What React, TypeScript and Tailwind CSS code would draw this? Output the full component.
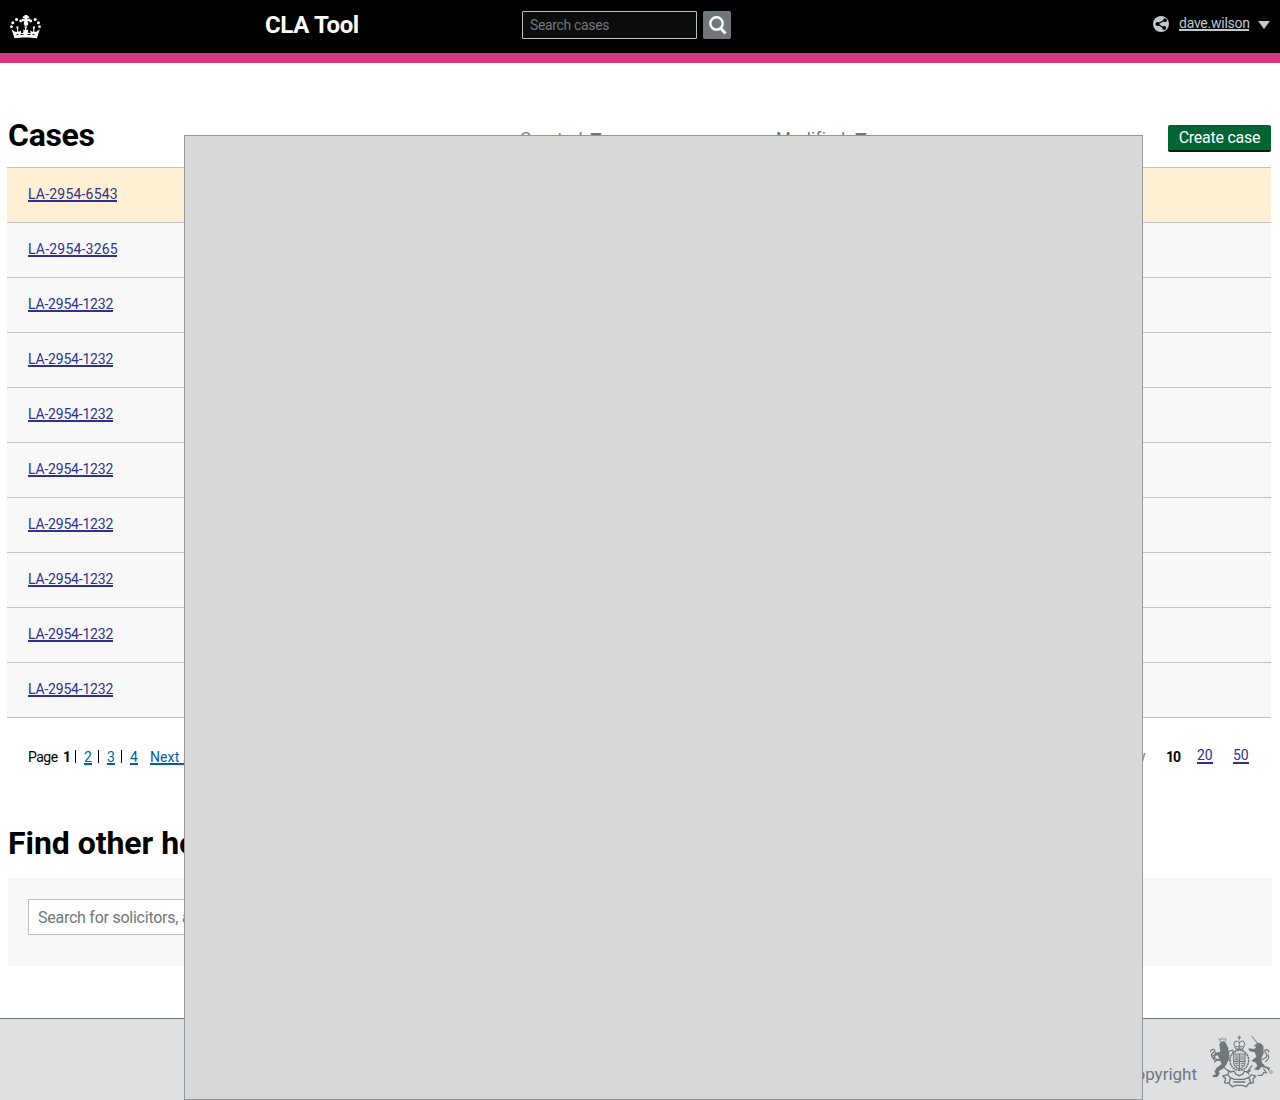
import React from "react";

const cases = [
  { id: "LA-2954-6543", active: true },
  { id: "LA-2954-3265" },
  { id: "LA-2954-1232" },
  { id: "LA-2954-1232" },
  { id: "LA-2954-1232" },
  { id: "LA-2954-1232" },
  { id: "LA-2954-1232" },
  { id: "LA-2954-1232" },
  { id: "LA-2954-1232" },
  { id: "LA-2954-1232" },
];

function Crown() {
  return (
    <svg viewBox="0 0 31 24" className="h-6 w-[31px]" fill="#fff">
      <path d="M14.500 0h3v1.300h1.600v1.900h-1.600v1.300l2.600-1v3l-2.500-.5.6 2.500c.4 1.400-.8 2.400-2.200 2.400s-2.600-1-2.200-2.400l.6-2.500-2.500.5v-3l2.600 1V3.200h-1.600V1.300h1.600z" />
      <circle cx="10.700" cy="6" r="1.400" />
      <circle cx="6.500" cy="4.600" r="1.500" />
      <circle cx="2.800" cy="7.700" r="1.500" />
      <circle cx="1.500" cy="11.700" r="1.400" />
      <circle cx="20.700" cy="6" r="1.400" />
      <circle cx="25.200" cy="4.600" r="1.500" />
      <circle cx="28.400" cy="7.700" r="1.500" />
      <circle cx="29.500" cy="11.700" r="1.400" />
      <path d="M4.500 23.200 1.500 14l3 2.600 2.400.4.300-2-1-3.500h2.400l-.6 3.500.6 2 2.400-1.500v3l2.400-1-.2-3 1.600.7.300-2-1-1.700h3.200l-1 1.700.3 2 1.600-.7-.2 3 2.400 1v-3l2.400 1.500.6-2-.6-3.500h2.400l-1 3.500.3 2 2.400-.4 3-2.600-3 9.200c-6.500-.9-16-.9-22.400 0z" />
      <path d="M6.500 19.800l2-.6M10.500 19.500h3M17.500 19.500h3M22.500 19.200l2 .6" stroke="#000" strokeWidth=".9" />
    </svg>
  );
}

function Crest() {
  return (
    <svg viewBox="0 0 210 186" className="h-[62px] w-[70px]" fill="none" stroke="#6f777b" strokeWidth="3.500">
      <path d="M103 17v14M98 22h10M89 36c-5 10 2 14 4 22h20c2-8 9-12 4-22-5-5-10-2-14 2-4-4-9-7-14-2zM92 50h22M92 57h22M103 38v20" strokeDasharray="5 1.500" />
      <ellipse cx="103" cy="91" rx="28" ry="30" strokeWidth="4.500" strokeDasharray="7 1.500" />
      <path d="M86 72h34v24c0 12-9 18-17 22-8-4-17-10-17-22zM103 72v45M86 94h34" />
      <path d="M90 78h10M90 84h10M90 89h10M108 76v14M114 76v14M90 100h10M92 106h9M107 100h10M107 106h7" strokeWidth="3" />
      <path d="M45 35l-3-9 7 3 3-6 3 6 8-4-2 10z" strokeWidth="2" />
      <path d="M43 42c3-8 16-9 21-1l4 10 3 3-2 5c6 12 5 21 2 30l-8 17-9 10-13 7 3 8-7 10H22l3-6 8-2-5-8 7-12 15-11-5-10-10 1-7 6-1-6 6-5 10-2-5-10-9 2-1-6 10-5 8-2z" fill="#6f777b" stroke="none" />
      <path d="M38 89c-10-2-23-9-17-18 4-5 12-8 7-12-5-3-12 2-12 7M33 65c-3 7-7 13-3 21M26 75c-5 5-4 10 2 14M70 65l13-5 3 8M66 87l12 5M56 112l17 13-5 8" />
      <path d="M138 18l27 28M143 20l17 25" strokeWidth="2" />
      <path d="M146 48l10-8 10-1 9 9 1 22-7 15 2 13 10 11 14 4-3 10-7-8-15-4-10 10-13-3 10-10-4-10-14-5 15-13-5-13-16-4-3-8 18 2 6-7-9-2z" fill="#6f777b" stroke="none" />
      <path d="M171 88c10-2 18-8 13-16-5-6-8-12 0-13 7 0 8 5 7 9M188 73c7 8 2 17-8 22M142 106l-16 20 7 7M175 116l9 12h-8l-5 8h-13" />
      <circle cx="198" cy="126" r="4" strokeWidth="2" />
      <path d="M69 120l8 6 10-3 5 9 11 5 11-5 4-9 11 4 9-7M54 138l14-4 8 9 12 5h30l12-5 10-9 12 5-8 8 1 11-13 2-8 10-12-4H93l-11 4-10-10-13-2 3-11zM76 144l-4 18M133 144l4 18M85 156h36" strokeWidth="4" />
    </svg>
  );
}

function Arrow({ className }: { className: string }) {
  return (
    <svg viewBox="0 0 12 8" className={className} fill="currentColor">
      <path d="M0 0h12L6 8z" />
    </svg>
  );
}

export default function App() {
  return (
    <div className="relative flex h-[1100px] w-[1280px] flex-col overflow-hidden bg-white font-[Roboto,sans-serif] text-black">
      <header className="flex h-[63px] shrink-0 items-start border-b-10 border-[#d53880] bg-black">
        <div className="w-[265px] pt-[15px] pl-[10px]"><Crown /></div>
        <div className="w-[257px] pt-[9px] text-[24px] leading-8 font-bold tracking-[-0.35px] text-white">CLA Tool</div>
        <div className="mt-[11px] h-7 w-[175px] rounded-[1px] border border-[#bfc1c3] bg-[#0b0c0c] pl-[7px] text-[14px] leading-[27px] tracking-[-0.35px] text-[#6f777b]">
          Search cases
        </div>
        <div className="mt-[11px] ml-[6px] h-7 w-7 rounded-[2px] bg-[#6f777b]">
          <svg viewBox="0 0 28 28" className="h-7 w-7" fill="none" stroke="#fff">
            <circle cx="13.500" cy="12.500" r="6.200" strokeWidth="2.400" />
            <path d="M17.500 17l5 5.500" strokeWidth="2.800" />
          </svg>
        </div>
        <div className="ml-auto flex pr-[10px] text-[#bfc9cb]">
          <svg viewBox="0 0 16 16" className="mt-4 mr-[10px] h-4 w-4">
            <circle cx="8" cy="8" r="8" fill="#bfc9cb" />
            <path d="M12 4 4.500 8l6.500 4" fill="none" stroke="#000" strokeWidth="1.300" />
            <circle cx="12" cy="4.200" r="1.900" fill="#000" />
            <circle cx="4.500" cy="8" r="2" fill="#000" />
            <circle cx="11.200" cy="11.900" r="1.900" fill="#000" />
          </svg>
          <a className="mt-[15px] h-4 w-[70px] border-b-2 border-[#bfc9cb] text-[14px] leading-[17px] tracking-[-0.25px] whitespace-nowrap">dave.wilson</a>
          <Arrow className="mt-[21px] ml-[9px] h-2 w-3" />
        </div>
      </header>

      <div className="flex h-[104px] shrink-0 pr-[9px] pl-2">
        <h1 className="w-[512px] pt-[52px] text-[32px] leading-10 font-bold tracking-[-0.3px]">Cases</h1>
        <div className="flex w-[256px] pt-[64px] text-[17px] leading-[22px] text-[#6f777b]">
          <span className="w-[70px] tracking-[0.6px]">Created</span>
          <Arrow className="mt-[6px] h-2 w-3" />
        </div>
        <div className="flex pt-[64px] text-[17px] leading-[22px] text-[#6f777b]">
          <span className="w-[79px] tracking-[0.3px]">Modified</span>
          <Arrow className="mt-[6px] h-2 w-3" />
        </div>
        <button className="mt-[62px] ml-auto h-[27px] w-[103px] rounded-[2px] border-b-2 border-[#001e0f] bg-[#006435] text-[16px] leading-[25px] tracking-[-0.25px] text-white">Create case</button>
      </div>

      <div className="mr-[9px] ml-[7px] shrink-0 border-b border-[#bfc1c3]">
        {cases.map((c, i) => (
          <div key={i} className={`flex h-[55px] border-t border-[#bfc1c3] pt-[18px] pl-[21px] ${c.active ? "bg-[#fff0d4]" : "bg-[#f8f8f8]"}`}>
            <a className={`h-4 border-b-2 border-[#2e3191] text-[14px] leading-[17px] whitespace-nowrap text-[#2e3191] ${i < 2 ? "w-[89px] tracking-[0.2px]" : "w-[85px] tracking-[-0.2px]"}`}>{c.id}</a>
          </div>
        ))}
      </div>

      <div className="flex h-[104px] shrink-0 pt-[30px] pr-[31px] pl-7 text-[14px] leading-[17px]">
        <div className="flex pt-px">
          <span className="w-[35px] tracking-[-0.5px]">Page</span>
          <b className="w-[12px]">1</b>
          {["2", "3", "4"].map((n) => (
            <span key={n} className="flex w-[23px]">
              <span className="mt-px mr-2 h-[13px] w-px bg-black" />
              <a className="h-4 w-2 border-b-2 border-[#005ea5] text-[#005ea5]">{n}</a>
            </span>
          ))}
          <a className="ml-[6px] h-4 border-b-2 border-[#005ea5] tracking-[0.1px] whitespace-nowrap text-[#005ea5]">Next »</a>
        </div>
        <div className="ml-auto flex">
          <span className="w-[56px] text-[#6f777b]"><span className="ml-[1px]">Show</span></span>
          <b className="w-[31px] pt-px tracking-[-1px]">10</b>
          <a className="mr-5 h-4 w-4 border-b-2 border-[#2e3191] leading-[15px] text-[#2e3191]">20</a>
          <a className="h-4 w-4 border-b-2 border-[#2e3191] leading-[15px] text-[#2e3191]">50</a>
        </div>
      </div>

      <h2 className="h-[56px] shrink-0 pl-2 text-[32px] leading-[42px] font-bold tracking-[-0.05px]">Find other help</h2>
      <div className="mx-2 h-[88px] shrink-0 bg-[#f8f8f8] pt-[21px] pl-5">
        <div className="h-9 w-[500px] border border-[#bfc1c3] bg-white pl-[9px] text-[16px] leading-[36px] tracking-[-0.25px] text-[#6f777b]">Search for solicitors, advisers</div>
      </div>

      <footer className="mt-[52px] flex grow justify-end border-t border-[#6f777b] bg-[#dee0e2] pr-[5px] text-[#6f777b]">
        <span className="mr-2 pt-[44px] text-[17px] leading-[22px]">© Crown copyright</span>
        <div className="pt-[11px]"><Crest /></div>
      </footer>

      <div className="absolute top-[135px] left-[184px] h-[965px] w-[959px] border border-[#979797] bg-[#d8d8d8]" />
    </div>
  );
}
